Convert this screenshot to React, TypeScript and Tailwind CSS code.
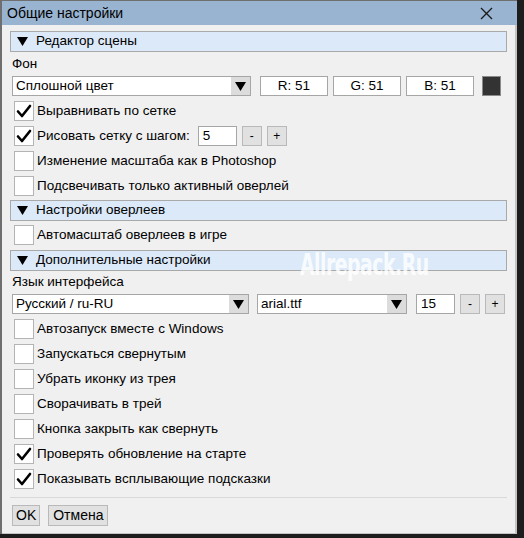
import React from "react"

const font = { fontFamily: '"Liberation Sans", Arial, sans-serif' }

function CheckMark() {
  return (
    <svg width="16" height="16" viewBox="0 0 16 16" fill="none">
      <path d="M2 8.5 L6 13 L14 3" stroke="#000" strokeWidth="2.6" strokeLinecap="round" strokeLinejoin="round" />
    </svg>
  )
}

function Triangle() {
  return (
    <svg width="11" height="9" viewBox="0 0 11 9">
      <path d="M0 0 H11 L5.5 9 Z" fill="#000" />
    </svg>
  )
}

function Section({ title }: { title: string }) {
  return (
    <div className="mx-[8px] flex h-[21px] items-center border border-[#a9a9a9] bg-[#dbe9f8] text-[13.5px] text-black">
      <span className="ml-[6px] mr-[8px] flex">
        <Triangle />
      </span>
      <span>{title}</span>
    </div>
  )
}

function CheckRow({ label, checked, children }: { label: string; checked?: boolean; children?: React.ReactNode }) {
  return (
    <div className="flex h-[20px] items-center px-[12px] text-[13.5px] text-black">
      <div className="flex h-[20px] w-[20px] items-center justify-center border border-[#b4b4b4] bg-white">
        {checked && <CheckMark />}
      </div>
      <span className="ml-[3px] whitespace-nowrap">{label}</span>
      {children}
    </div>
  )
}

function Select({ value, width }: { value: string; width: string }) {
  return (
    <div className={`flex h-[20px] items-stretch border border-[#a6a6a6] bg-white ${width}`}>
      <span className="flex-1 pl-[3px] text-[13.5px] leading-[18px]">{value}</span>
      <span className="flex w-[19px] items-center justify-center bg-[#dcdcdc]">
        <Triangle />
      </span>
    </div>
  )
}

function Field({ value, width, center }: { value: string; width: string; center?: boolean }) {
  return (
    <div
      className={`h-[20px] border border-[#a6a6a6] bg-white text-[13.5px] leading-[18px] ${width} ${
        center ? "text-center" : "pl-[4px]"
      }`}
    >
      {value}
    </div>
  )
}

function SmallBtn({ label }: { label: string }) {
  return (
    <div className="flex h-[20px] w-[20px] items-center justify-center border border-[#b9b9b9] bg-[#e1e1e1] text-[12px]">
      {label}
    </div>
  )
}

export default function App() {
  return (
    <div className="relative h-[538px] w-[524px] overflow-hidden bg-[#1d1d1d]" style={font}>
      <div className="flex h-[534px] w-[517px] flex-col border-l-[2px] border-t border-[#6f6f6f] bg-[#f0f0f0]">
        {/* title bar */}
        <div className="flex h-[24px] shrink-0 items-center justify-between bg-[#99b4d1] pl-[5px] pr-[24px]">
          <span className="text-[14px] text-black">Общие настройки</span>
          <svg width="13" height="13" viewBox="0 0 13 13">
            <path d="M1 1 L12 12 M12 1 L1 12" stroke="#1a1a1a" strokeWidth="1.3" />
          </svg>
        </div>

        <div className="flex flex-1 flex-col border-r-[2px] border-b border-[#c4c4c4]">
          <div className="mt-[6px]">
            <Section title="Редактор сцены" />
          </div>
          <div className="flex h-[24px] items-center px-[10px] text-[13.5px]">Фон</div>
          <div className="flex items-center gap-[8px] px-[10px]">
            <Select value="Сплошной цвет" width="w-[239px]" />
            <div className="flex gap-[5px] pl-[1px]">
              <Field value="R: 51" width="w-[68px]" center />
              <Field value="G: 51" width="w-[68px]" center />
              <Field value="B: 51" width="w-[68px]" center />
            </div>
            <div className="h-[20px] w-[19px] border border-[#8a8a8a] bg-[#333333]" />
          </div>

          <div className="mt-[5px] flex flex-col gap-[5px]">
            <CheckRow label="Выравнивать по сетке" checked />
            <CheckRow label="Рисовать сетку с шагом:" checked>
              <div className="ml-[8px] flex items-center gap-[5px]">
                <Field value="5" width="w-[39px]" />
                <SmallBtn label="-" />
                <SmallBtn label="+" />
              </div>
            </CheckRow>
            <CheckRow label="Изменение масштаба как в Photoshop" />
            <CheckRow label="Подсвечивать только активный оверлей" />
          </div>

          <div className="mt-[4px]">
            <Section title="Настройки оверлеев" />
          </div>
          <div className="mt-[4px]">
            <CheckRow label="Автомасштаб оверлеев в игре" />
          </div>

          <div className="mt-[5px]">
            <Section title="Дополнительные настройки" />
          </div>
          <div className="flex h-[23px] items-center px-[10px] text-[13.5px]">Язык интерфейса</div>
          <div className="flex items-center px-[10px]">
            <Select value="Русский / ru-RU" width="w-[239px]" />
            <div className="ml-[8px]">
              <Select value="arial.ttf" width="w-[150px]" />
            </div>
            <div className="ml-[9px] flex items-center gap-[5px]">
              <Field value="15" width="w-[39px]" />
              <SmallBtn label="-" />
              <SmallBtn label="+" />
            </div>
          </div>

          <div className="mt-[5px] flex flex-col gap-[5px]">
            <CheckRow label="Автозапуск вместе с Windows" />
            <CheckRow label="Запускаться свернутым" />
            <CheckRow label="Убрать иконку из трея" />
            <CheckRow label="Сворачивать в трей" />
            <CheckRow label="Кнопка закрыть как свернуть" />
            <CheckRow label="Проверять обновление на старте" checked />
            <CheckRow label="Показывать всплывающие подсказки" checked />
          </div>

          <div className="mx-[8px] mt-[8px] border-t border-[#d8d8d8]" />

          <div className="mt-[7px] flex gap-[8px] px-[10px]">
            <div className="flex h-[21px] items-center border border-[#b9b9b9] bg-[#e1e1e1] px-[3px] text-[14px]">OK</div>
            <div className="flex h-[21px] items-center border border-[#b9b9b9] bg-[#e1e1e1] px-[4px] text-[14px]">Отмена</div>
          </div>
        </div>
      </div>

      {/* watermark */}
      <div
        className="absolute left-[300px] top-[242px] text-[30px] font-bold tracking-tight text-white/80"
        style={{ fontFamily: '"DejaVu Sans Condensed", "Liberation Sans Narrow", sans-serif', transform: "scaleX(0.7)", transformOrigin: "left" }}
      >
        Allrepack.Ru
      </div>
    </div>
  )
}
